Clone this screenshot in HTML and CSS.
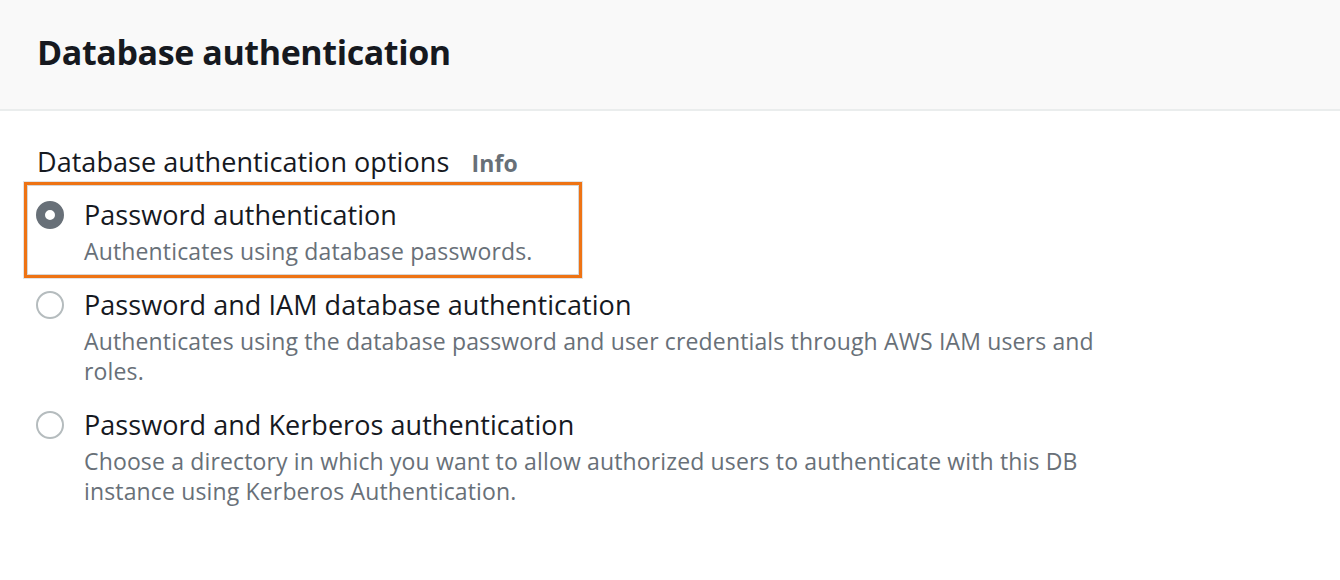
FILE: index.html
```html
<!DOCTYPE html>
<html>
<head>
<meta charset="utf-8">
<link rel="stylesheet" href="styles.css">
</head>
<body>
<div class="panel">
  <div class="panel-header">
    <h2 class="title">Database authentication</h2>
  </div>
  <div class="panel-body">
    <div class="field-label">Database authentication options <span class="info">Info</span></div>
    <div class="options">
      <div class="option selected">
        <span class="radio checked"></span>
        <div class="option-text">
          <div class="option-label">Password authentication</div>
          <div class="option-desc">Authenticates using database passwords.</div>
        </div>
      </div>
      <div class="option">
        <span class="radio"></span>
        <div class="option-text">
          <div class="option-label">Password and IAM database authentication</div>
          <div class="option-desc">Authenticates using the database password and user credentials through AWS IAM users and roles.</div>
        </div>
      </div>
      <div class="option">
        <span class="radio"></span>
        <div class="option-text">
          <div class="option-label">Password and Kerberos authentication</div>
          <div class="option-desc">Choose a directory in which you want to allow authorized users to authenticate with this DB instance using Kerberos Authentication.</div>
        </div>
      </div>
    </div>
  </div>
</div>
</body>
</html>
```

FILE: styles.css
```css
html, body {
  margin: 0;
  padding: 0;
  background: #ffffff;
}
body {
  font-family: "Open Sans", "Noto Sans", sans-serif;
  color: #16191f;
  width: 1340px;
  height: 580px;
  overflow: hidden;
}
.panel-header {
  height: 111px;
  background: #f9f9f9;
  border-bottom: 2px solid #eaeded;
  box-sizing: border-box;
  display: flex;
  align-items: center;
  padding-left: 37px;
}
.title {
  margin: 0;
  font-size: 34px;
  font-weight: 700;
  letter-spacing: -0.4px;
  color: #16191f;
  position: relative;
  top: -3px;
}
.panel-body {
  padding: 36px 0 0 37px;
}
.field-label {
  font-size: 27px;
  line-height: 30px;
  color: #16191f;
  letter-spacing: 0.05px;
}
.info {
  font-weight: 700;
  font-size: 23px;
  color: #687078;
  margin-left: 15px;
  letter-spacing: 0.2px;
}
.options {
  display: flex;
  flex-direction: column;
  gap: 21px;
  margin-top: 19px;
  margin-left: -1px;
}
.option {
  display: flex;
  align-items: flex-start;
  gap: 20px;
  position: relative;
}
.option.selected::after {
  content: "";
  position: absolute;
  left: -12px;
  top: -15px;
  width: 558px;
  height: 96px;
  box-sizing: border-box;
  border: 3px solid #ee7314;
  box-shadow: inset 0 0 0 1px #d6d6d6, 0 0 0 1px rgba(200,200,200,0.5);
  pointer-events: none;
}
.radio {
  flex: none;
  width: 28px;
  height: 28px;
  border-radius: 50%;
  box-sizing: border-box;
  border: 2px solid #b5bcbe;
  background: #fff;
  margin-top: 4px;
}
.radio.checked {
  border: 9.5px solid #687078;
  background: #fff;
}
.option-text {
  width: 1030px;
}
.option-label {
  font-size: 27px;
  line-height: 36px;
  color: #16191f;
  letter-spacing: 0.05px;
}
.option-desc {
  margin-top: 3px;
  font-size: 23px;
  line-height: 30px;
  color: #687078;
  letter-spacing: 0.15px;
}
```
